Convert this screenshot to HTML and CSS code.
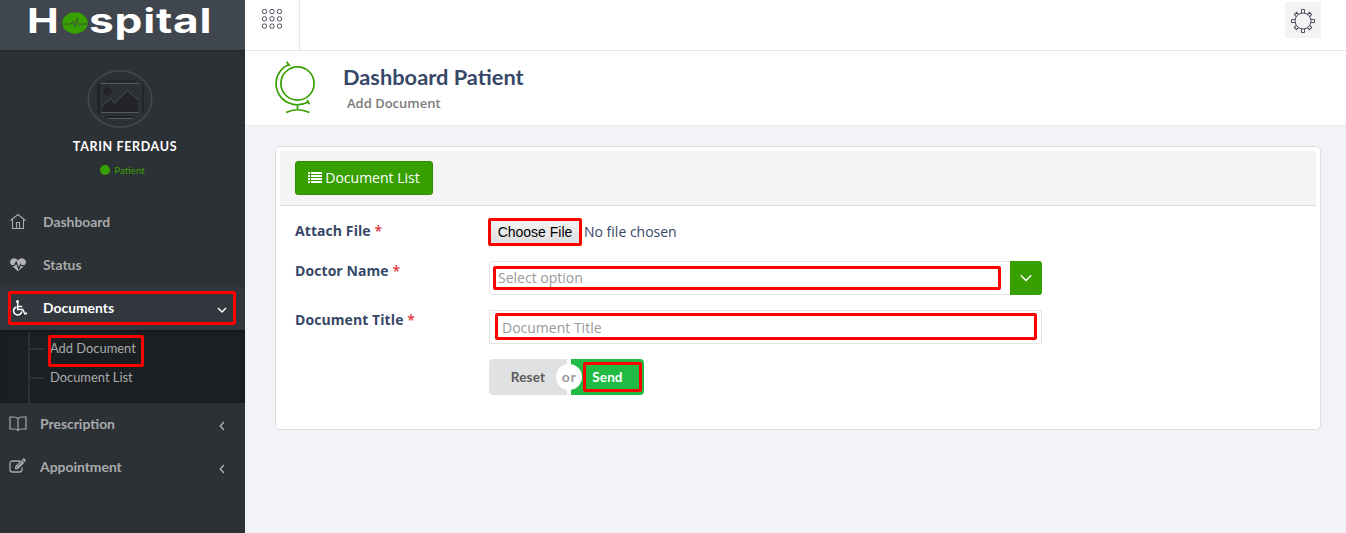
FILE: index.html
```html
<!DOCTYPE html>
<html lang="en">
<head>
<meta charset="utf-8">
<title>Dashboard Patient</title>
<link rel="stylesheet" href="styles.css">
</head>
<body>
<div class="app">
  <aside class="sidebar">
    <div class="logo"><span class="logo-h">H</span><svg class="logo-o" width="26" height="22" viewBox="0 0 26 22"><ellipse cx="13" cy="11" rx="12.7" ry="10.7" fill="#379f00"/><path d="M1 12h8l2-3 2 6 2-9 2 8 2-2h6" fill="none" stroke="#3c5a35" stroke-width="1"/></svg><span class="logo-rest">spital</span></div>
    <div class="user">
      <svg class="avatar" width="66" height="60" viewBox="0 0 66 60">
        <ellipse cx="33" cy="30" rx="31.7" ry="28.2" fill="#2c3136" stroke="#43474b" stroke-width="1.7"/>
        <path d="M10 17q1-3 3-3v32q-3-2-3-6zM55 14q2 1 2 4v22q0 4-2 6z" fill="#222427"/>
        <path d="M17 13q3-2 6-2h20q4 0 7 2zM17 47h32q-2 2-6 2H22q-3 0-5-2z" fill="#222427"/>
        <path d="M13.5 14.5h38M14 43.5h38M21 49.5h25" stroke="#54595c" fill="none"/>
        <circle cx="20.5" cy="22.5" r="5" fill="#222427" stroke="#3c4245" stroke-width=".5"/>
        <path d="M15.500 37l8-7.500 4 4.500 13-12.500 10.500 9.500v12h-35.500z" fill="#222427"/>
        <path d="M15.500 37l8-7.500 4 4.500 13-12.500 10.500 9.500" fill="none" stroke="#54595c" stroke-width=".8"/>
      </svg>
      <div class="user-name">TARIN FERDAUS</div>
      <div class="user-role"><i class="dot"></i><span>Patient</span></div>
    </div>
    <nav class="menu">
      <div class="item"><svg class="ico" width="18" height="18" viewBox="0 0 18 18" fill="none" stroke="#a9aaab" stroke-width="1.1"><path d="M1.500 7.500L9 1.500l7.500 6M3.500 6.500v9h11v-9M7.500 15.500V9.500h3v6"/></svg><span class="t-dash">Dashboard</span></div>
      <div class="item"><svg class="ico" width="18" height="18" viewBox="0 0 18 18"><path d="M9 15.500L2.300 9Q.3 6.500 1.500 4.200 3 2 5.500 2.200 8 2.500 9 4.500q1-2 3.500-2.300Q15 2 16.500 4.200 17.700 6.500 15.700 9z" fill="#b4b4b4"/><path d="M1 9.500h4.500L7.200 6l2.500 7 1.800-4.500.5 1h5" fill="none" stroke="#2c3136" stroke-width="1.200"/></svg><span class="t-status">Status</span></div>
      <div class="item active"><svg class="ico" width="18" height="18" viewBox="0 0 18 18" fill="none" stroke="#fff" stroke-width="1.500"><circle cx="6.500" cy="2.500" r="1.500" fill="#fff" stroke="none"/><path d="M6.700 4v6.500h5l2.300 4.500 2-1M6.700 7.500h4.500M5.500 8Q2.500 9 2.600 12t3.700 4q3.500 0 4.700-3.500"/></svg><span class="t-docs">Documents</span><svg class="caret" width="10" height="10" viewBox="0 0 10 10"><path d="M1 3l4 4 4-4" fill="none" stroke="#fff" stroke-width="1.500"/></svg></div>
      <div class="sub"><div class="branch"><span class="t-add">Add Document</span></div><div class="branch"><span class="t-list">Document List</span></div></div>
      <div class="item"><svg class="ico" width="18" height="18" viewBox="0 0 18 18" fill="none" stroke="#a9aaab" stroke-width="1.200"><path d="M9 3.500Q7 2 5 2H1v12h4q3 0 4 1.500Q10 14 13 14h4V2h-4q-2 0-4 1.500zM9 3.500v12"/></svg><span class="t-pres">Prescription</span><svg class="caret" width="10" height="10" viewBox="0 0 10 10"><path d="M7 1L3.200 5 7 9" fill="none" stroke="#b4b5b6" stroke-width="1.300"/></svg></div>
      <div class="item"><svg class="ico" width="18" height="18" viewBox="0 0 18 18"><path d="M11 3H3.500Q1 3 1 5.500v6Q1 14 3.500 14h7q2.500 0 2.500-2.500V9.500" fill="none" stroke="#a9aaab" stroke-width="1.300"/><path d="M6 8.500L12.500 2l2.800 2.800-6.500 6.500H6z" fill="#a9aaab"/><path d="M13 1.500l1-1q1-.5 2 .5t.5 2l-1 1z" fill="#a9aaab"/><path d="M7 9l1.300 1.300M8.500 8l4-4" stroke="#2c3136" stroke-width=".7"/></svg><span class="t-app">Appointment</span><svg class="caret" width="10" height="10" viewBox="0 0 10 10"><path d="M7 1L3.200 5 7 9" fill="none" stroke="#b4b5b6" stroke-width="1.300"/></svg></div>
    </nav>
  </aside>
  <main class="main">
    <header class="topbar">
      <div class="grid-btn"><svg width="22" height="22" viewBox="0 0 22 22" fill="none" stroke="#514b5b" stroke-width="1"><circle cx="3.500" cy="3.500" r="2.200"/><circle cx="11" cy="3.500" r="2.200"/><circle cx="18.500" cy="3.500" r="2.200"/><circle cx="3.500" cy="10.800" r="2.200"/><circle cx="11" cy="10.800" r="2.200"/><circle cx="18.500" cy="10.800" r="2.200"/><circle cx="3.500" cy="18.100" r="2.200"/><circle cx="11" cy="18.100" r="2.200"/><circle cx="18.500" cy="18.100" r="2.200"/></svg></div>
      <div class="gear-btn"><svg width="26" height="26" viewBox="-13 -13 26 26" fill="none" stroke="#4c4c62" stroke-width="1"><circle r="8"/><path d="M-1.500-8v-3.500h3v3.500"/><path d="M-1.500-8v-3.500h3v3.500" transform="rotate(90)"/><path d="M-1.500-8v-3.500h3v3.500" transform="rotate(180)"/><path d="M-1.500-8v-3.500h3v3.500" transform="rotate(270)"/><path d="M-1.600-7.900v-2.800h3.200v2.800" transform="rotate(45)"/><path d="M-1.600-7.900v-2.800h3.200v2.800" transform="rotate(135)"/><path d="M-1.600-7.900v-2.800h3.200v2.800" transform="rotate(225)"/><path d="M-1.600-7.900v-2.800h3.200v2.800" transform="rotate(315)"/></svg></div>
    </header>
    <section class="page-head">
      <svg class="globe" width="42" height="54" viewBox="0 0 42 54" fill="none" stroke="#379f00" stroke-width="1.700"><circle cx="23.500" cy="22.500" r="16.600"/><path d="M14.500 3.700A20.800 20.800 0 0 0 15 42Q24 46 34.500 41M12.500 .8l3.500 4.200M13.800 4l1.500-1M33 39l2.500 4.200M23.500 44v4.500M12 51.500q11.500-5.500 23.500 0"/></svg>
      <div class="titles"><h1>Dashboard Patient</h1><p>Add Document</p></div>
    </section>
    <section class="card">
      <div class="card-head"><a class="btn-list"><svg width="14" height="12" viewBox="0 0 14 12" fill="#fff"><path d="M0 0h2v2H0zM3 0h11v2H3zM0 3h2v2H0zM3 3h11v2H3zM0 6h2v2H0zM3 6h11v2H3zM0 9h2v2H0zM3 9h11v2H3z"/></svg><span>Document List</span></a></div>
      <form class="form">
        <div class="row row-file"><label>Attach File <b>*</b></label><div class="file"><button type="button" class="choose">Choose File<i class="mark mark-file"></i></button><span>No file chosen</span></div></div>
        <div class="row row-select"><label>Doctor Name <b>*</b></label><div class="select"><div class="select-text">Select option</div><div class="select-btn"><svg width="12" height="8" viewBox="0 0 12 8"><path d="M.7 1.200L6 6.500l5.300-5.300" fill="none" stroke="#fff" stroke-width="1.400"/></svg></div><i class="mark mark-select"></i></div></div>
        <div class="row row-title"><label>Document Title <b>*</b></label><div class="input">Document Title<i class="mark mark-title"></i></div></div>
        <div class="actions"><button type="button" class="reset">Reset</button><button type="button" class="send">Send<i class="mark mark-send"></i></button><span class="or">or</span></div>
      </form>
    </section>
  </main>
  <i class="mark mark-docs"></i>
  <i class="mark mark-add"></i>
</div>
</body>
</html>
```
FILE: styles.css
```css
* { box-sizing: border-box; }
body { margin: 0; overflow: hidden; font-family: "Open Sans", sans-serif; font-size: 14px; color: #374767; background: #f1f3f6; }
.app { display: flex; width: 1346px; height: 533px; position: relative; }
.sidebar { width: 245px; background: #2c3136; flex: none; font-family: Lato, sans-serif; }
.logo { height: 50px; background: #40464d; display: flex; padding-left: 27px; color: #fff; font: bold 34px/41px Inter, sans-serif; box-shadow: 0 1px 3px #22262a; }
.logo-h { width: 35px; transform-origin: 0 50%; transform: scaleX(1.25); }
.logo-o { margin-top: 12px; }
.logo-rest { margin-left: 1px; transform-origin: 0 50%; transform: scaleX(1.3); letter-spacing: .6px; }
.user { height: 151px; display: flex; flex-direction: column; align-items: center; padding-top: 19px; }
.avatar { margin-right: 5px; }
.user-name { margin: 9px 0 0 5px; color: #fff; font-weight: bold; font-size: 12.500px; line-height: 18px; letter-spacing: .65px; white-space: nowrap; }
.user-role { display: flex; align-items: center; gap: 4px; color: #379f00; font-size: 9.800px; line-height: 12px; margin-top: 8px; }
.dot { width: 10px; height: 10px; border-radius: 50%; background: #379f00; }
.item { height: 43px; display: flex; align-items: center; padding: 0 18px 2px 9px; color: #a9aaab; font-weight: bold; font-size: 13.900px; }
.item span { flex: 1; margin-left: 16px; }
.item .t-pres, .item .t-app { margin-left: 13px; }
.caret { margin-top: 4px; }
.active { background: #32373e; color: #fff; }
.active .ico { margin-left: 2px; margin-right: -2px; }
.sub { height: 73px; background: #1c1f22 linear-gradient(#2c3136, #2c3136) 28px 0 / 2px 73px no-repeat; box-shadow: inset 0 3px 3px -1px #15181a; padding: 4px 0 11px 30px; }
.branch { height: 29px; display: flex; align-items: center; color: #a9aaab; font-size: 12.900px; white-space: nowrap; }
.branch span { padding-bottom: 1px; }
.branch::before { content: ""; width: 15px; height: 2px; background: #2c3136; margin-right: 5px; }
.main { flex: 1; min-width: 0; }
.topbar { height: 51px; background: #fff; border-bottom: 1px solid #e1e6ef; display: flex; justify-content: space-between; }
.grid-btn { width: 55px; border-right: 1px solid #e1e6ef; padding: 8px 0 0 16px; }
.gear-btn { width: 36px; height: 36px; background: #f3f3f3; margin: 2px 25px 0 0; display: flex; align-items: center; justify-content: center; }
.gear-btn svg { margin-top: 2px; }
.page-head { height: 75px; background: #fff; border-bottom: 1px solid #e1e6ef; display: flex; padding: 10px 0 0 29px; }
.titles { margin-left: 27px; }
h1 { margin: 0; font: bold 21.800px/32px Lato, sans-serif; color: #374767; white-space: nowrap; }
.titles p { margin: 0 0 0 4px; font-size: 13px; line-height: 20px; font-weight: 600; color: #7b7b7b; }
.card { margin: 20px 25px 0 30px; height: 284px; border: 1px solid #dcdde0; border-radius: 5px; padding: 4px; background: #fff; }
.card-head { height: 55px; background: #f4f4f4; border-bottom: 1px solid #dcdcdc; border-radius: 3px 3px 0 0; padding: 10px 15px; }
.btn-list { width: 138px; height: 34px; display: flex; align-items: center; justify-content: center; gap: 3px; background: #379f00; border: 1px solid #318d01; border-radius: 3px; color: #fff; white-space: nowrap; }
.btn-list span { padding-bottom: 2px; }
.form { padding: 12px 15px; }
.row { display: flex; }
label { width: 194px; font-weight: 700; font-size: 14px; line-height: 20px; margin-top: 3px; letter-spacing: .08px; }
label b { font-weight: 600; color: #e5343d; }
.row-file { height: 43px; }
.file { display: flex; align-items: flex-start; }
.choose { position: relative; width: 92px; height: 27px; margin-top: 1px; border: 1px solid #999; background: linear-gradient(#f4f4f4, #ddd); padding: 0 0 2px; font: 14px "Liberation Sans", sans-serif; color: #000; }
.file span { line-height: 28px; margin-left: 3px; font-size: 14px; }
.row-select { height: 49px; }
.row-title { height: 49px; }
.select { position: relative; display: flex; width: 553px; height: 34px; border: 1px solid #e4e5e7; border-radius: 4px; color: #999; }
.select-text { flex: 1; padding-left: 8px; line-height: 32px; }
.select-btn { width: 32px; margin: -1px; background: #379f00; border-radius: 0 3px 3px 0; display: flex; align-items: center; justify-content: center; }
.input { position: relative; width: 553px; height: 34px; border: 1px solid #e4e5e7; padding-left: 12px; line-height: 33px; color: #999; }
.row-select label { margin-top: 0; }
.row-title label { margin-top: 0; }
.actions { position: relative; display: flex; gap: 4px; margin-left: 194px; width: 155px; }
.actions button { height: 36px; border: 0; padding: 0; font: bold 13.500px Lato, sans-serif; }
.actions .reset { width: 78px; background: #e0e1e2; color: #5a5a5a; border-radius: 4px 0 0 4px; letter-spacing: .2px; }
.actions .send { position: relative; width: 73px; background: #21ba45; color: #fff; border-radius: 0 4px 4px 0; letter-spacing: .1px; }
.or { position: absolute; left: 67px; top: 5px; width: 26px; height: 26px; border-radius: 50%; background: #fff; color: #999; font: bold 14px/26px Lato, sans-serif; letter-spacing: .6px; text-align: center; }
.mark { position: absolute; border: 3px solid #f00; border-radius: 2px; z-index: 2; }
.mark-file { left: -2px; top: -2px; width: 94px; height: 28px; }
.mark-select { left: 3px; top: 4px; width: 508px; height: 24px; }
.mark-title { left: 5px; top: 2px; width: 542px; height: 27px; }
.mark-send { left: 12px; top: 3px; width: 59px; height: 30px; }
.mark-docs { left: 8px; top: 291px; width: 228px; height: 34px; }
.mark-add { left: 48px; top: 335px; width: 96px; height: 32px; }
```
